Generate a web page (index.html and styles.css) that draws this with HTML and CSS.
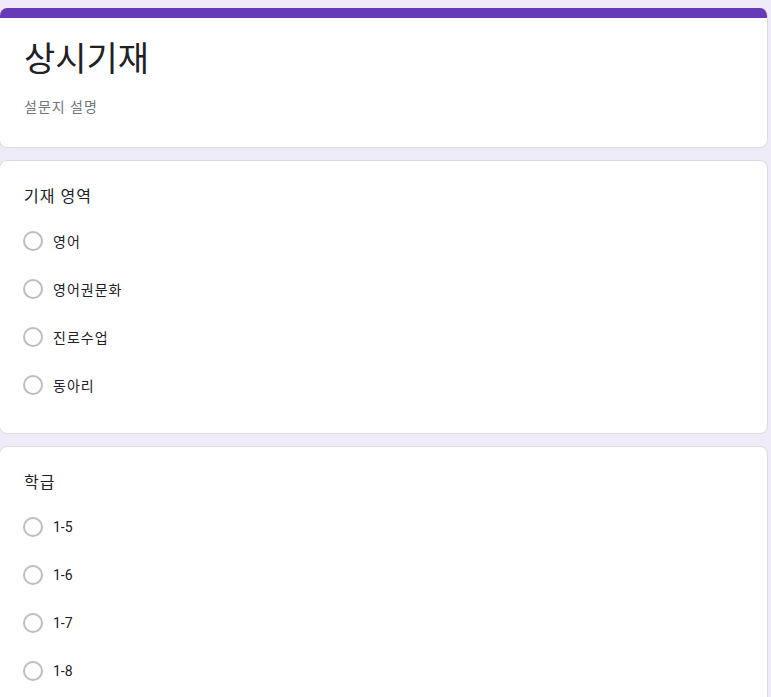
FILE: index.html
```html
<!DOCTYPE html>
<html lang="ko">
<head>
    <meta charset="UTF-8">
    <meta name="viewport" content="width=device-width, initial-scale=1.0">
    <title>상시기재</title>
    <link rel="stylesheet" href="styles.css">
</head>
<body>
    <div class="form">
        <div class="card header-card">
            <div class="top-bar"></div>
            <div class="header-body">
                <h1 class="form-title">상시기재</h1>
                <div class="form-desc">설문지 설명</div>
            </div>
        </div>

        <div class="card question">
            <div class="q-title">기재 영역</div>
            <label class="option"><span class="radio"></span><span class="option-text">영어</span></label>
            <label class="option"><span class="radio"></span><span class="option-text">영어권문화</span></label>
            <label class="option"><span class="radio"></span><span class="option-text">진로수업</span></label>
            <label class="option"><span class="radio"></span><span class="option-text">동아리</span></label>
        </div>

        <div class="card question">
            <div class="q-title">학급</div>
            <label class="option"><span class="radio"></span><span class="option-text num">1-5</span></label>
            <label class="option"><span class="radio"></span><span class="option-text num">1-6</span></label>
            <label class="option"><span class="radio"></span><span class="option-text num">1-7</span></label>
            <label class="option"><span class="radio"></span><span class="option-text num">1-8</span></label>
        </div>
    </div>
</body>
</html>
```

FILE: styles.css
```css
body {
    margin: 0;
    background: #f0ebf8;
    font-family: Roboto, "Noto Sans CJK KR", sans-serif;
    color: #202124;
}
.form {
    margin: 8px 3px 0 -1px;
    display: flex;
    flex-direction: column;
    gap: 12px;
}
.card {
    background: #fff;
    border: 1px solid #dadce0;
    border-radius: 8px;
}
.header-card {
    border-top: none;
    overflow: hidden;
}
.top-bar {
    height: 10px;
    background: #673ab7;
}
.header-body {
    padding: 21px 24px 30px;
}
.form-title {
    margin: 0;
    font-size: 34px;
    font-weight: 400;
    line-height: 40px;
}
.form-desc {
    margin-top: 18px;
    font-size: 14px;
    line-height: 20px;
    letter-spacing: 1px;
    color: #70757a;
}
.question {
    padding: 24px 24px 24px;
}
.q-title {
    font-size: 16px;
    line-height: 24px;
    letter-spacing: 1px;
    margin-bottom: 8px;
}
.option {
    display: flex;
    align-items: center;
    height: 48px;
    font-size: 14px;
}
.radio {
    width: 16px;
    height: 16px;
    border: 2px solid #bdbdbd;
    border-radius: 50%;
    margin-left: -1px;
    flex-shrink: 0;
}
.option-text {
    margin-left: 10px;
    letter-spacing: 1px;
}
.option-text.num {
    letter-spacing: 0;
}
```
